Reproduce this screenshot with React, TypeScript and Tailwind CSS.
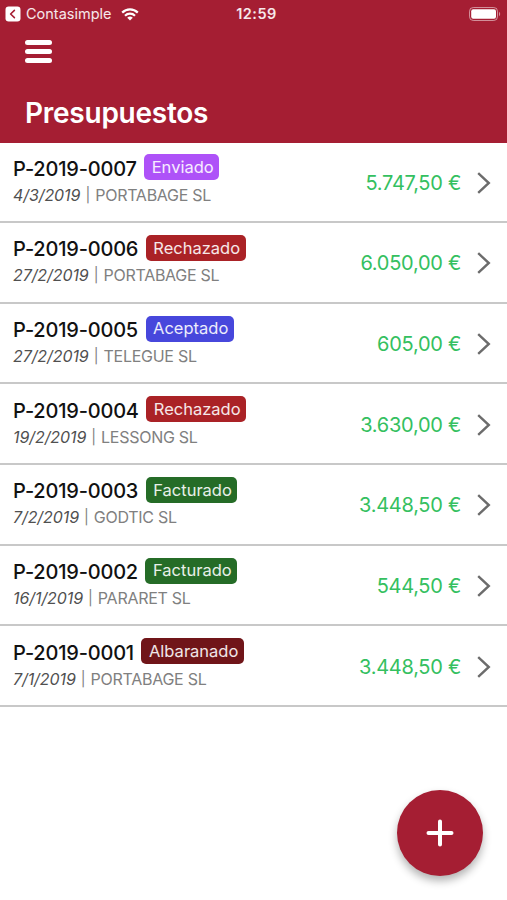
import React from 'react'

type Quote = {
  code: string
  status: keyof typeof statusColors
  date: string
  customer: string
  total: string
}

const statusColors = {
  Enviado: 'bg-[#ae52f8]',
  Rechazado: 'bg-[#aa2226]',
  Aceptado: 'bg-[#4747dc]',
  Facturado: 'bg-[#256c27]',
  Albaranado: 'bg-[#701519]',
}

const quotes: Quote[] = [
  { code: 'P-2019-0007', status: 'Enviado', date: '4/3/2019', customer: 'PORTABAGE SL', total: '5.747,50 €' },
  { code: 'P-2019-0006', status: 'Rechazado', date: '27/2/2019', customer: 'PORTABAGE SL', total: '6.050,00 €' },
  { code: 'P-2019-0005', status: 'Aceptado', date: '27/2/2019', customer: 'TELEGUE SL', total: '605,00 €' },
  { code: 'P-2019-0004', status: 'Rechazado', date: '19/2/2019', customer: 'LESSONG SL', total: '3.630,00 €' },
  { code: 'P-2019-0003', status: 'Facturado', date: '7/2/2019', customer: 'GODTIC SL', total: '3.448,50 €' },
  { code: 'P-2019-0002', status: 'Facturado', date: '16/1/2019', customer: 'PARARET SL', total: '544,50 €' },
  { code: 'P-2019-0001', status: 'Albaranado', date: '7/1/2019', customer: 'PORTABAGE SL', total: '3.448,50 €' },
]

const StatusBar: React.FC = () => (
  <div className="grid h-7 grid-cols-[1fr_auto_1fr] items-center pl-[5px] pr-[6px]">
    <div className="flex items-center">
      <svg className="h-4 w-4" viewBox="0 0 16 16" fill="none">
        <rect x="0.5" y="0.5" width="15" height="15" rx="3.2" fill="#fff" />
        <path d="M9.4 4.4 5.6 8l3.8 3.6" stroke="#a51e33" strokeWidth="1.6" strokeLinecap="round" strokeLinejoin="round" />
      </svg>
      <span className="ml-[5px] text-[14.5px] leading-none text-white/90">Contasimple</span>
      <svg className="ml-[9px] h-[13px] w-[18px]" viewBox="0 0 18 13" fill="none" stroke="#fff" strokeWidth="2.2">
        <path d="M1.2 4.6a11 11 0 0 1 15.6 0" />
        <path d="M4 7.7a7.1 7.1 0 0 1 10 0" />
        <path d="M9 12.5 6.2 9.8a4 4 0 0 1 5.6 0Z" fill="#fff" stroke="none" />
      </svg>
    </div>
    <span className="ml-[7px] text-[14.5px] font-semibold leading-none tracking-[0.5px] text-white/90">12:59</span>
    <svg className="h-[14px] w-8 justify-self-end" viewBox="0 0 32 14" fill="none">
      <rect x="0.5" y="0.5" width="28" height="13" rx="3.8" stroke="#fff" strokeOpacity="0.5" />
      <rect x="2.2" y="2.2" width="24.8" height="9.6" rx="2" fill="#fff" />
      <path d="M30 4.8c1.6.8 1.6 3.6 0 4.4Z" fill="#fff" fillOpacity="0.5" />
    </svg>
  </div>
)

const QuoteRow: React.FC<{ quote: Quote }> = ({ quote }) => (
  <li className="flex h-[80.65px] items-center justify-between border-b-2 border-[#c8c8c8] pl-[13px] pr-4 pt-[2px]">
    <div className="pb-[2.5px]">
      <div className="flex items-center">
        <span className="pt-[3px] text-[20px] font-medium leading-6 tracking-[-0.2px] text-[#111]">{quote.code}</span>
        <span className={`ml-[7.5px] flex h-[26px] items-center rounded-[5px] pl-[7.5px] pr-[5.5px] text-[16.5px] text-white/90 ${statusColors[quote.status]}`}>
          {quote.status}
        </span>
      </div>
      <div className="flex items-center gap-[5px] whitespace-nowrap text-[16px] leading-[28.5px] text-[#808080]">
        <em className="tracking-[-0.08px] text-[#505050]">{quote.date}</em>
        <span className="text-[14.5px]">|</span>
        <span className="tracking-[-0.27px]">{quote.customer}</span>
      </div>
    </div>
    <div className="flex items-center">
      <span className="text-[20px] leading-6 tracking-[-0.27px] text-[#34c060]">{quote.total}</span>
      <svg className="ml-4 h-[22px] w-[14px]" viewBox="0 0 14 22" fill="none">
        <path d="M1.2 1.2 11.8 11 1.2 20.8" stroke="#6c6c6c" strokeWidth="2.4" />
      </svg>
    </div>
  </li>
)

export default function App() {
  return (
    <div className="relative h-[900px] w-[507px] overflow-hidden bg-white font-['Inter',sans-serif]">
      <header className="h-[142.5px] bg-[#a51e33] text-white">
        <StatusBar />
        <button className="ml-[25px] mt-3 flex flex-col gap-1" aria-label="Menú">
          <span className="h-[5px] w-[27px] rounded-full bg-white" />
          <span className="h-[5px] w-[27px] rounded-full bg-white" />
          <span className="h-[5px] w-[27px] rounded-full bg-white" />
        </button>
        <h1 className="ml-[25px] mt-[33px] text-[28px] font-semibold leading-[34px] tracking-[-0.25px]">Presupuestos</h1>
      </header>

      <ul>
        {quotes.map(q => (
          <QuoteRow key={q.code} quote={q} />
        ))}
      </ul>

      <button
        className="absolute bottom-[24.5px] right-[24.5px] flex h-[85.5px] w-[85.5px] items-center justify-center rounded-full bg-[#a51e33] shadow-[0_5px_9px_rgba(0,0,0,0.3)]"
        aria-label="Añadir"
      >
        <svg className="h-7 w-7" viewBox="0 0 28 28" fill="none">
          <path d="M14 2.5v23M2.5 14h23" stroke="#fff" strokeWidth="4" strokeLinecap="round" />
        </svg>
      </button>
    </div>
  )
}
